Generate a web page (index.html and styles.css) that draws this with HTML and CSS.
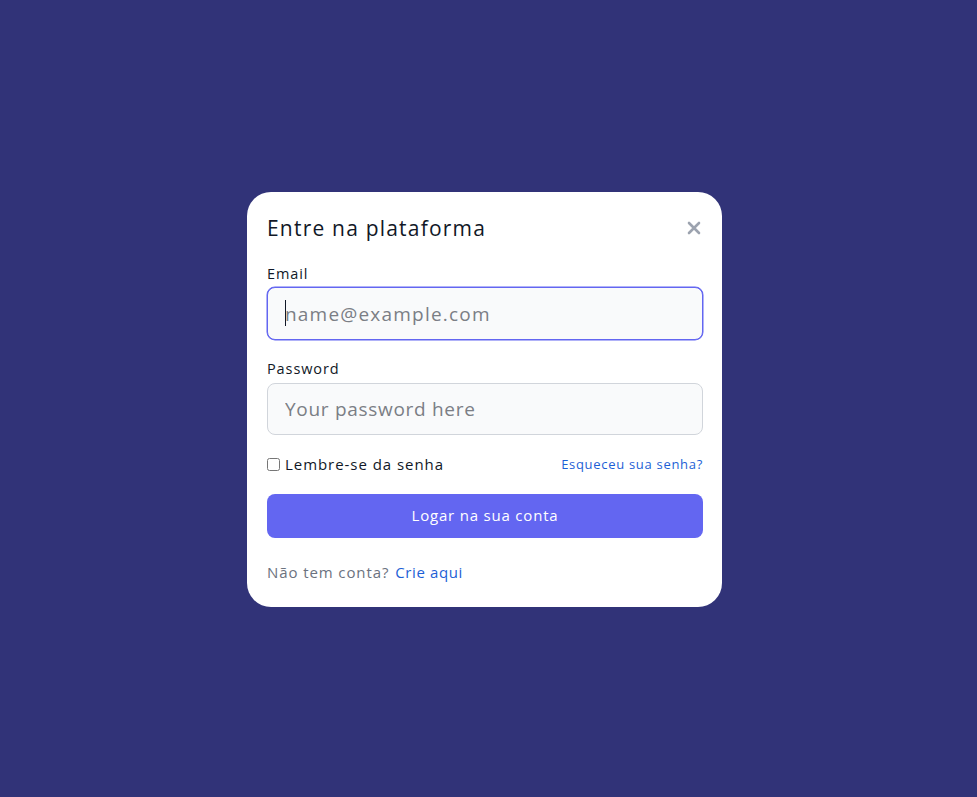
FILE: index.html
```html
<!DOCTYPE html>
<html lang="pt">
<head>
<meta charset="utf-8">
<title>Entre na plataforma</title>
<link rel="stylesheet" href="styles.css">
</head>
<body>
<div class="overlay">
  <div class="modal">
    <div class="modal-head">
      <h3 class="title">Entre na plataforma</h3>
      <button class="close" type="button" aria-label="Fechar">
        <svg width="14" height="14" viewBox="0 0 14 14"><path d="M2 2L12 12M12 2L2 12" stroke="#9ca3af" stroke-width="2.6" stroke-linecap="round"/></svg>
      </button>
    </div>
    <form class="form">
      <label class="label" for="email">Email</label>
      <div class="field">
        <input class="input input-email input-focus" id="email" type="email" placeholder="name@example.com">
        <span class="caret"></span>
      </div>
      <label class="label label-pw" for="password">Password</label>
      <input class="input input-pw" id="password" type="password" placeholder="Your password here">
      <div class="row">
        <label class="remember"><input type="checkbox" class="check"> Lembre-se da senha</label>
        <a href="#" class="forgot">Esqueceu sua senha?</a>
      </div>
      <button type="button" class="submit">Logar na sua conta</button>
      <div class="footer"><span class="muted">Não tem conta?</span><a href="#" class="link">Crie aqui</a></div>
    </form>
  </div>
</div>
</body>
</html>
```
FILE: styles.css
```css
* { box-sizing: border-box; }
html, body { margin: 0; height: 100%; }
body {
  background: #313378;
  font-family: "Open Sans", "Noto Sans", sans-serif;
  color: #111827;
}
.overlay {
  min-height: 797px;
  display: flex;
  align-items: flex-start;
  justify-content: center;
  padding-top: 192px;
  padding-right: 8px;
}
.modal {
  width: 475px;
  height: 415px;
  background: #ffffff;
  border-radius: 24px;
  padding: 20px 19px 0 20px;
}
.modal-head {
  display: flex;
  justify-content: space-between;
  align-items: center;
  height: 32px;
}
.title {
  margin: 0;
  font-size: 21px;
  font-weight: 500;
  letter-spacing: 1.2px;
  line-height: 32px;
  color: #111827;
}
.close {
  border: 0;
  background: none;
  padding: 0;
  margin-right: 2px;
  width: 14px;
  height: 14px;
  display: flex;
}
.form { display: flex; flex-direction: column; }
.label {
  display: block;
  font-size: 14.5px;
  font-weight: 500;
  line-height: 20px;
  letter-spacing: 0.9px;
  margin-top: 20px;
  margin-bottom: 3px;
}
.label-pw { margin-top: 19px; margin-bottom: 4px; }
.field { position: relative; }
.caret {
  position: absolute;
  left: 18px;
  top: 13px;
  width: 1px;
  height: 26px;
  background: #111827;
}
.input {
  display: block;
  width: 100%;
  height: 52px;
  border: 1px solid #d1d5db;
  border-radius: 8px;
  background: #f9fafb;
  padding: 0 17px;
  font-family: inherit;
  font-size: 19px;
  color: #111827;
  outline: none;
}
.input-email { letter-spacing: 1.2px; }
.input-pw { letter-spacing: 0.7px; }
.input::placeholder { color: #7b7e85; }
.input-focus {
  height: 53px;
  border-color: #6366f1;
  box-shadow: 0 0 0 0.5px #6366f1;
}
.row {
  display: flex;
  justify-content: space-between;
  align-items: center;
  margin-top: 19px;
  height: 20px;
}
.remember {
  display: flex;
  align-items: center;
  font-size: 15px;
  letter-spacing: 0.95px;
  color: #111827;
}
.check {
  width: 13px;
  height: 13px;
  margin: 1px 5px 0 0;
}
.forgot {
  font-size: 13px;
  letter-spacing: 0.7px;
  color: #1d5fd6;
  text-decoration: none;
}
.submit {
  margin-top: 20px;
  height: 44px;
  width: 100%;
  border: 0;
  border-radius: 8px;
  background: #6366f1;
  color: #ffffff;
  font-family: inherit;
  font-size: 15px;
  font-weight: 500;
  letter-spacing: 0.8px;
  padding: 0 0 2px;
}
.footer {
  margin-top: 24px;
  font-size: 15px;
  line-height: 20px;
  letter-spacing: 0.9px;
  display: flex;
  gap: 6px;
}
.muted { color: #6b7280; }
.link { color: #1d5fd6; text-decoration: none; letter-spacing: 0.6px; }
```
